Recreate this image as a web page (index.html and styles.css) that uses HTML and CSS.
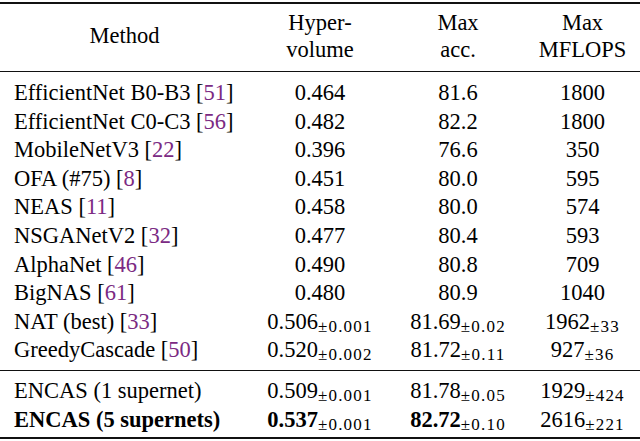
FILE: index.html
```html
<!DOCTYPE html>
<html>
<head>
<meta charset="utf-8">
<link rel="stylesheet" href="styles.css">
</head>
<body>
<table class="results">
  <colgroup>
    <col class="c-method">
    <col class="c-hv">
    <col class="c-acc">
    <col class="c-flops">
  </colgroup>
  <thead>
    <tr>
      <th class="method">Method</th>
      <th>Hyper-<br>volume</th>
      <th>Max<br>acc.</th>
      <th>Max<br>MFLOPS</th>
    </tr>
  </thead>
  <tbody class="baselines">
    <tr><td class="name">EfficientNet B0-B3 [<span class="cite">51</span>]</td><td>0.464</td><td>81.6</td><td>1800</td></tr>
    <tr><td class="name">EfficientNet C0-C3 [<span class="cite">56</span>]</td><td>0.482</td><td>82.2</td><td>1800</td></tr>
    <tr><td class="name">MobileNetV3 [<span class="cite">22</span>]</td><td>0.396</td><td>76.6</td><td>350</td></tr>
    <tr><td class="name">OFA (#75) [<span class="cite">8</span>]</td><td>0.451</td><td>80.0</td><td>595</td></tr>
    <tr><td class="name">NEAS [<span class="cite">11</span>]</td><td>0.458</td><td>80.0</td><td>574</td></tr>
    <tr><td class="name">NSGANetV2 [<span class="cite">32</span>]</td><td>0.477</td><td>80.4</td><td>593</td></tr>
    <tr><td class="name">AlphaNet [<span class="cite">46</span>]</td><td>0.490</td><td>80.8</td><td>709</td></tr>
    <tr><td class="name">BigNAS [<span class="cite">61</span>]</td><td>0.480</td><td>80.9</td><td>1040</td></tr>
    <tr><td class="name">NAT (best) [<span class="cite">33</span>]</td><td>0.506<span class="pm">±0.001</span></td><td>81.69<span class="pm">±0.02</span></td><td>1962<span class="pm">±33</span></td></tr>
    <tr><td class="name">GreedyCascade [<span class="cite">50</span>]</td><td>0.520<span class="pm">±0.002</span></td><td>81.72<span class="pm">±0.11</span></td><td>927<span class="pm">±36</span></td></tr>
  </tbody>
  <tbody class="ours">
    <tr><td class="name">ENCAS (1 supernet)</td><td>0.509<span class="pm">±0.001</span></td><td>81.78<span class="pm">±0.05</span></td><td>1929<span class="pm">±424</span></td></tr>
    <tr><td class="name best">ENCAS (5 supernets)</td><td><b class="best">0.537</b><span class="pm">±0.001</span></td><td><b class="best">82.72</b><span class="pm">±0.10</span></td><td>2616<span class="pm">±221</span></td></tr>
  </tbody>
</table>
</body>
</html>
```

FILE: styles.css
```css
html, body {
  margin: 0;
  padding: 0;
  background: #ffffff;
}

body {
  color: #000000;
  font-family: "Liberation Serif", "Times New Roman", serif;
}

.results {
  width: 640px;
  table-layout: fixed;
  border-collapse: separate;
  border-spacing: 0;
  margin-top: 2px;
  border-top: 2px solid #111111;
  border-bottom: 2px solid #111111;
  font-family: "Liberation Serif", "Times New Roman", serif;
  font-size: 22.5px;
}

.c-method { width: 249px; }
.c-hv { width: 142px; }
.c-acc { width: 134px; }
.c-flops { width: 115px; }

.results th {
  font-weight: normal;
  line-height: 26.5px;
  padding: 6px 0 8px;
  text-align: center;
  vertical-align: middle;
  border-bottom: 1px solid #111111;
}

.results td {
  line-height: 28.6px;
  padding: 0;
  text-align: center;
  white-space: nowrap;
}

.results td.name {
  text-align: left;
  padding-left: 14px;
}

.baselines tr:first-child td {
  padding-top: 7px;
}

.baselines tr:last-child td {
  padding-bottom: 5px;
}

.ours tr:first-child td {
  border-top: 1px solid #111111;
  padding-top: 6px;
}

.ours tr:last-child td {
  padding-bottom: 3px;
}

.cite {
  color: #7b2a83;
}

.best {
  font-weight: bold;
}

.pm {
  font-size: 17px;
  letter-spacing: 1.2px;
  line-height: 0;
  vertical-align: -3px;
  font-weight: normal;
}
```
